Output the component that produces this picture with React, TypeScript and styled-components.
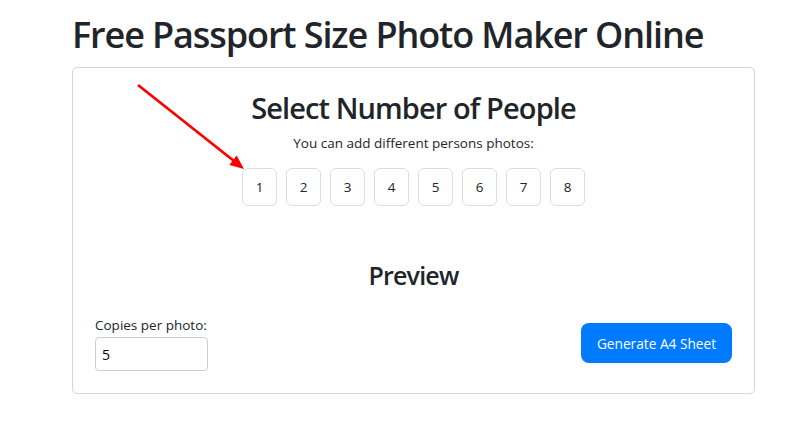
import React, { useState } from "react";
import styled, { createGlobalStyle } from "styled-components";

const Global = createGlobalStyle`
  html, body { margin: 0; padding: 0; background: #fff; }
  body {
    font-family: "Open Sans", "Noto Sans", "Liberation Sans", sans-serif;
    color: #212529;
  }
  * { box-sizing: border-box; }
`;

const Page = styled.div`
  position: relative;
  width: 794px;
  height: 442px;
  padding: 11px 0 0 72px;
`;

const Title = styled.h1`
  margin: 0 0 8px;
  font-size: 36px;
  line-height: 48px;
  font-weight: 600;
  letter-spacing: -1.1px;
`;

const Card = styled.div`
  width: 683px;
  height: 327px;
  border: 1px solid #d6d6d6;
  border-radius: 5px;
  padding: 23px 22px 22px;
  display: flex;
  flex-direction: column;
`;

const Heading = styled.h2<{ $size: number; $spacing: number }>`
  margin: 0;
  text-align: center;
  font-size: ${(p) => p.$size}px;
  line-height: 1.2;
  font-weight: 600;
  letter-spacing: ${(p) => p.$spacing}px;
`;

const Sub = styled.p`
  margin: 7px 0 0;
  text-align: center;
  font-size: 13.5px;
  line-height: 20px;
`;

const NumberRow = styled.div`
  display: flex;
  justify-content: center;
  gap: 9px;
  margin-top: 15px;
`;

const NumButton = styled.button`
  width: 35px;
  height: 38px;
  padding: 0;
  border: 1px solid #dcdcdc;
  border-radius: 6px;
  background: #fff;
  color: #212529;
  font-family: inherit;
  font-size: 13.5px;
  cursor: pointer;
`;

const PreviewBlock = styled.div`
  margin-top: 54px;
`;

const Bottom = styled.div`
  margin-top: auto;
  display: flex;
  justify-content: space-between;
  align-items: flex-end;
`;

const Field = styled.label`
  display: flex;
  flex-direction: column;
  gap: 3px;
  font-size: 13.5px;
  line-height: 18px;
`;

const Input = styled.input`
  width: 113px;
  height: 34px;
  border: 1px solid #cfcfcf;
  border-radius: 4px;
  padding: 0 6px;
  font-family: inherit;
  font-size: 14px;
  color: #000;
`;

const Generate = styled.button`
  width: 151px;
  height: 40px;
  margin-bottom: 8px;
  border: none;
  border-radius: 8px;
  background: #007bff;
  color: #fff;
  font-family: inherit;
  font-size: 13.7px;
  cursor: pointer;
`;

const Arrow = styled.svg`
  position: absolute;
  left: 0;
  top: 0;
  pointer-events: none;
`;

export default function App() {
  const [copies, setCopies] = useState("5");
  return (
    <>
      <Global />
      <Page>
        <Title>Free Passport Size Photo Maker Online</Title>
        <Card>
          <Heading $size={29} $spacing={-0.9}>Select Number of People</Heading>
          <Sub>You can add different persons photos:</Sub>
          <NumberRow>
            {[1, 2, 3, 4, 5, 6, 7, 8].map((n) => (
              <NumButton key={n}>{n}</NumButton>
            ))}
          </NumberRow>
          <PreviewBlock>
            <Heading $size={25} $spacing={-0.8}>Preview</Heading>
          </PreviewBlock>
          <Bottom>
            <Field>
              Copies per photo:
              <Input value={copies} onChange={(e) => setCopies(e.target.value)} />
            </Field>
            <Generate>Generate A4 Sheet</Generate>
          </Bottom>
        </Card>
        <Arrow width="794" height="442" viewBox="0 0 794 442">
          <line x1="138" y1="85" x2="234" y2="161" stroke="#ff0000" strokeWidth="2.8" />
          <polygon points="244,169 229.3,165 236.7,155.6" fill="#ff0000" />
        </Arrow>
      </Page>
    </>
  );
}
